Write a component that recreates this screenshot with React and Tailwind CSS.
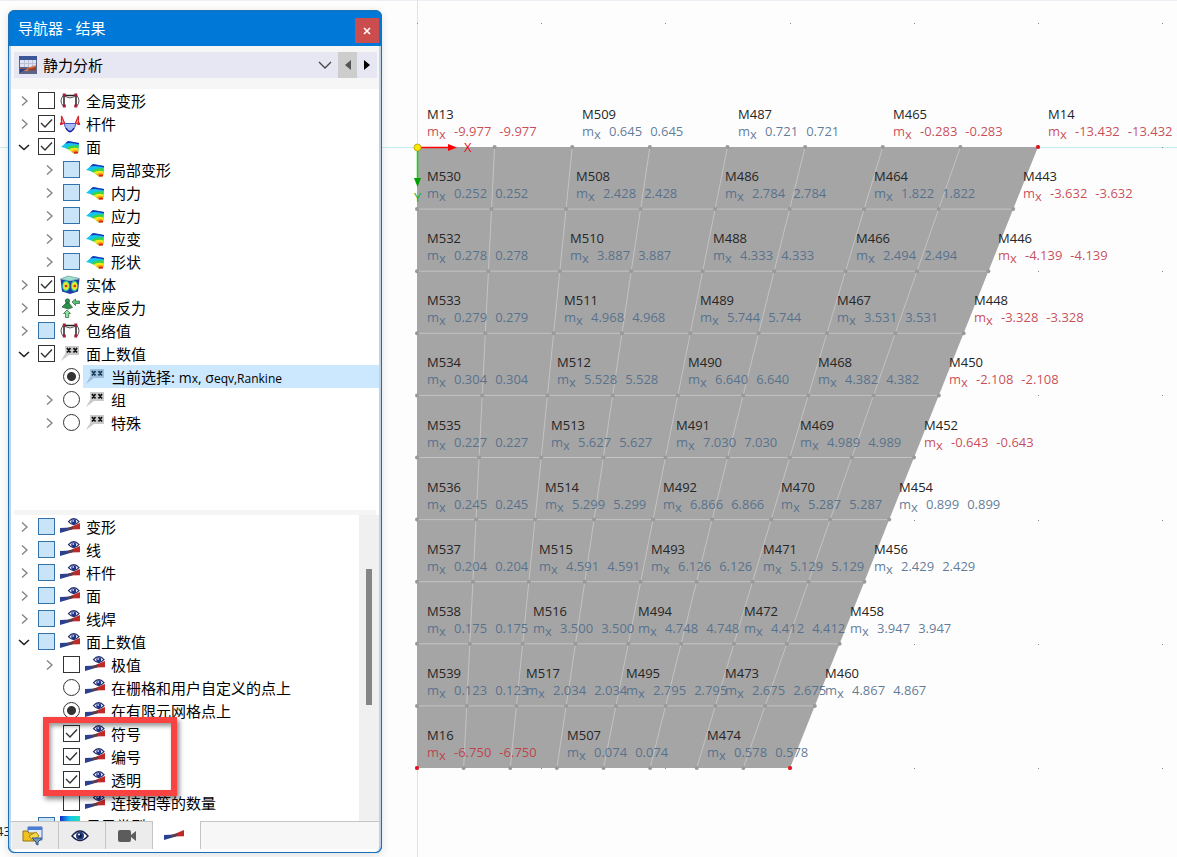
import { useId } from 'react'

const RESULT_ITEMS = [
  { label: '全局变形', icon: 'frame', state: 'off', arrow: 'closed' },
  { label: '杆件', icon: 'member', state: 'on', arrow: 'closed' },
  { label: '面', icon: 'surface', state: 'on', arrow: 'open' },
  { label: '局部变形', icon: 'surface', state: 'mixed', arrow: 'closed', child: true },
  { label: '内力', icon: 'surface', state: 'mixed', arrow: 'closed', child: true },
  { label: '应力', icon: 'surface', state: 'mixed', arrow: 'closed', child: true },
  { label: '应变', icon: 'surface', state: 'mixed', arrow: 'closed', child: true },
  { label: '形状', icon: 'surface', state: 'mixed', arrow: 'closed', child: true },
  { label: '实体', icon: 'solid', state: 'on', arrow: 'closed' },
  { label: '支座反力', icon: 'support', state: 'off', arrow: 'closed' },
  { label: '包络值', icon: 'frame', state: 'mixed', arrow: 'closed' },
  { label: '面上数值', icon: 'values', state: 'on', arrow: 'open' },
  { label: 'current', icon: 'values', state: 'on', radio: 'values', child: true, selected: true },
  { label: '组', icon: 'values', state: 'off', radio: 'values', arrow: 'closed', child: true },
  { label: '特殊', icon: 'values', state: 'off', radio: 'values', arrow: 'closed', child: true },
]

const DISPLAY_ITEMS = [
  { label: '变形', icon: 'display', state: 'mixed', arrow: 'closed' },
  { label: '线', icon: 'display', state: 'mixed', arrow: 'closed' },
  { label: '杆件', icon: 'display', state: 'mixed', arrow: 'closed' },
  { label: '面', icon: 'display', state: 'mixed', arrow: 'closed' },
  { label: '线焊', icon: 'display', state: 'mixed', arrow: 'closed' },
  { label: '面上数值', icon: 'display', state: 'mixed', arrow: 'open' },
  { label: '极值', icon: 'display', state: 'off', arrow: 'closed', child: true },
  { label: '在栅格和用户自定义的点上', icon: 'display', state: 'off', radio: 'points', child: true },
  { label: '在有限元网格点上', icon: 'display', state: 'on', radio: 'points', child: true },
  { label: '符号', icon: 'display', state: 'on', child: true },
  { label: '编号', icon: 'display', state: 'on', child: true },
  { label: '透明', icon: 'display', state: 'on', child: true },
  { label: '连接相等的数量', icon: 'display', state: 'off', child: true },
  { label: '显示类型', icon: 'rainbow', state: 'mixed' },
]

// one row per mesh line, [node name, value]
const MESH_VALUES = [
  [['M13', '-9.977'], ['M509', '0.645'], ['M487', '0.721'], ['M465', '-0.283'], ['M14', '-13.432']],
  [['M530', '0.252'], ['M508', '2.428'], ['M486', '2.784'], ['M464', '1.822'], ['M443', '-3.632']],
  [['M532', '0.278'], ['M510', '3.887'], ['M488', '4.333'], ['M466', '2.494'], ['M446', '-4.139']],
  [['M533', '0.279'], ['M511', '4.968'], ['M489', '5.744'], ['M467', '3.531'], ['M448', '-3.328']],
  [['M534', '0.304'], ['M512', '5.528'], ['M490', '6.640'], ['M468', '4.382'], ['M450', '-2.108']],
  [['M535', '0.227'], ['M513', '5.627'], ['M491', '7.030'], ['M469', '4.989'], ['M452', '-0.643']],
  [['M536', '0.245'], ['M514', '5.299'], ['M492', '6.866'], ['M470', '5.287'], ['M454', '0.899']],
  [['M537', '0.204'], ['M515', '4.591'], ['M493', '6.126'], ['M471', '5.129'], ['M456', '2.429']],
  [['M538', '0.175'], ['M516', '3.500'], ['M494', '4.748'], ['M472', '4.412'], ['M458', '3.947']],
  [['M539', '0.123'], ['M517', '2.034'], ['M495', '2.795'], ['M473', '2.675'], ['M460', '4.867']],
  [['M16', '-6.750'], ['M507', '0.074'], ['M474', '0.578']],
]

const LEFT = 417
const TOP = 147
const SIZE = 621
const BOTTOM_WIDTH = 373
const ROWS = 10
const COLS = 8
const GRID = SIZE / 5

function node(row, col) {
  const width = SIZE - ((SIZE - BOTTOM_WIDTH) * row) / ROWS
  return { x: LEFT + (width * col) / COLS, y: TOP + (SIZE * row) / ROWS }
}

const range = (n) => Array.from({ length: n }, (_, i) => i)

function FrameIcon() {
  return (
    <svg width="20" height="20" viewBox="0 0 20 20" fill="none">
      <path d="M4 16V4.500H16V16" stroke="#222" strokeWidth="1.500" />
      <path d="M5 5.500Q10 8.500 15 5.500M3.500 4Q-1.500 10 3.500 15.500M16.500 4Q21.500 10 16.500 15.500" stroke="#555" />
      <path d="M2.800 2.500h3v3h-3zM14.300 2.500h3v3h-3zM2.800 13.500h3v3h-3zM14.300 13.500h3v3h-3z" fill="#a51e38" />
    </svg>
  )
}

function MemberIcon() {
  return (
    <svg width="20" height="20" viewBox="0 0 20 20">
      <path d="M4 9.500H16Q13.500 18 10 18T4 9.500z" fill="#a9bdf5" stroke="#4a55c8" />
      <path d="M6 14Q10 21 14 14" fill="none" stroke="#1b2599" strokeWidth="1.300" />
      <path d="M1.500 2L1.500 10L4.500 9zM18.500 2L18.500 10L15.500 9z" fill="#f3b0b0" stroke="#d8262e" strokeWidth="1.200" />
      <path d="M0 8.500h2.500v2.500H0zM17.500 8.500h2.500v2.500h-2.500z" fill="#d8262e" />
    </svg>
  )
}

function SurfaceIcon() {
  return (
    <svg width="20" height="20" viewBox="0 0 20 20">
      <path d="M1 10L8 4L19 6L18 16L14 16.500Q8 11 1 10z" fill="#14c4ee" />
      <path d="M5 6.500L8 4L19 6L19 7.500Q11 5 5 6.500z" fill="#1e35b8" />
      <path d="M6 11Q11 7.500 18.800 8.500L18 16L14 16.500Q10 12 6 11z" fill="#38d44a" />
      <path d="M8.500 12.500Q13 9.800 18.500 11.500L18 16L14 16.500z" fill="#f4e81c" />
      <path d="M11.500 14.500Q14.500 12.200 18.300 13.500L18 16L14 16.500z" fill="#fb9a16" />
      <path d="M14 15Q16 14 18.100 15L18 16.500H14z" fill="#dd2018" />
    </svg>
  )
}

function SolidIcon() {
  return (
    <svg width="20" height="20" viewBox="0 0 20 20">
      <path d="M.5 4L10 6V19L2 16.500z" fill="#1e40b0" />
      <path d="M10 6L19.500 4L18 16.500L10 19z" fill="#2438a5" />
      <path d="M.5 4L8 1L19.500 3.500L10 6z" fill="#9ee0cf" stroke="#5d8a8a" strokeWidth=".6" />
      <ellipse cx="6" cy="11" rx="3.800" ry="5.400" fill="#22c4a8" />
      <ellipse cx="14.300" cy="11" rx="3.600" ry="5.400" fill="#22c4a8" />
      <ellipse cx="6" cy="11" rx="2.900" ry="4" fill="#e6e82a" />
      <ellipse cx="14.500" cy="11" rx="2.700" ry="4" fill="#e6e82a" />
      <circle cx="6" cy="11" r="1.300" fill="#d92424" />
      <circle cx="14.800" cy="11" r="1.300" fill="#d92424" />
    </svg>
  )
}

function SupportIcon() {
  return (
    <svg width="20" height="20" viewBox="0 0 20 20" fill="#2f8f4c" stroke="#1d6334" strokeWidth=".7">
      <circle cx="7.500" cy="3" r="2.200" />
      <path d="M6 5H9L12.500 9.500L8 11L2 9z" />
      <path d="M12 4L15.500 1V3H19.500V5.500H15.500V7.500z" fill="#5cc47a" />
      <path d="M7 12L10.500 15.500H8.700V19.500H5.500V15.500H3.500z" fill="#8ce0a0" />
    </svg>
  )
}

function ValuesIcon({ selected }) {
  return (
    <svg width="20" height="20" viewBox="0 0 20 20">
      <path d="M5 2H19V11H9L1 17L5.500 9z" fill={selected ? '#9fc0dc' : '#cacaca'} />
      <path d="M7 4L10.500 8.500M10.500 4L7 8.500M13.500 4L17 8.500M17 4L13.500 8.500" stroke={selected ? '#183a58' : '#111'} strokeWidth="1.700" />
    </svg>
  )
}

// blue wedge running into a red one, 20 units wide
function Wedges() {
  return (
    <>
      <path d="M0 11L11 10.500L14 11L12 12.500L0 16z" fill="#2b4190" />
      <path d="M8 11L20 6V12.300L8 12.600z" fill="#bd2a27" />
      <path d="M7 11L13 9.500V12L7 13z" fill="#54404e" />
    </>
  )
}

function DisplayIcon() {
  return (
    <svg width="20" height="20" viewBox="0 0 20 20">
      <Wedges />
      <path d="M8.500 4.700Q13.700 -1.500 19 4.700Q13.700 10.500 8.500 4.700z" fill="#fff" stroke="#222d6b" strokeWidth="1.200" />
      <circle cx="13.700" cy="4.700" r="2.500" fill="#1f3285" />
      <circle cx="13.200" cy="4" r=".9" fill="#b6c6ff" />
    </svg>
  )
}

function RainbowIcon() {
  const id = useId()
  return (
    <svg width="20" height="20" viewBox="0 0 20 20">
      <linearGradient id={id}>
        <stop offset="0" stopColor="#1726c8" />
        <stop offset=".5" stopColor="#16c6f0" />
        <stop offset="1" stopColor="#1fe0b0" />
      </linearGradient>
      <rect width="20" height="20" fill={`url(#${id})`} />
    </svg>
  )
}

function AnalysisIcon() {
  return (
    <svg className="shrink-0" width="18" height="18" viewBox="0 0 18 18">
      <rect width="18" height="18" fill="#5d6584" />
      <rect width="18" height="4" fill="#3c5698" />
      <rect x="1" y="4" width="16" height="7" fill="#dfe3f1" />
      <path d="M5.500 4V11M9.500 4V11M13.500 4V11M1 7.500H17" stroke="#b9c0d8" />
      <path d="M1 12H8L17 9V12L9 15H1z" fill="#d9774a" />
      <path d="M1 12.500H9L1 16.500z" fill="#263d88" />
      <path d="M9 13L17 11V14.500H9z" fill="#96412f" />
    </svg>
  )
}

const ICONS = {
  frame: FrameIcon,
  member: MemberIcon,
  surface: SurfaceIcon,
  solid: SolidIcon,
  support: SupportIcon,
  values: ValuesIcon,
  display: DisplayIcon,
  rainbow: RainbowIcon,
}

function Toggle({ id, state, radio }) {
  if (radio) {
    return (
      <input
        id={id}
        type="radio"
        name={radio}
        defaultChecked={state === 'on'}
        className="m-0 size-[17px] shrink-0 appearance-none rounded-full border border-[#333] bg-white checked:bg-[radial-gradient(circle,#333_4px,transparent_5px)]"
      />
    )
  }
  return (
    <span className="relative size-[17px] shrink-0">
      <input
        id={id}
        type="checkbox"
        defaultChecked={state === 'on'}
        className={`peer m-0 block size-[17px] appearance-none border ${
          state === 'mixed' ? 'border-[#3472aa] bg-[#c9e3f8]' : 'border-[#333] bg-white'
        }`}
      />
      <svg className="pointer-events-none absolute inset-0 hidden peer-checked:block" width="17" height="17" fill="none">
        <path d="M3 8L7 12L14 4.500" stroke="#333" strokeWidth="1.400" />
      </svg>
    </span>
  )
}

function TreeRow({ item }) {
  const id = useId()
  const Icon = ICONS[item.icon]
  return (
    <li className={`flex h-[23px] items-center ${item.child ? 'pl-[31px]' : 'pl-[6px]'}`}>
      {item.arrow ? (
        <button type="button" aria-label="展开" className="mr-2 flex w-3 shrink-0 justify-center">
          <svg width="12" height="12" viewBox="0 0 12 12" fill="none">
            {item.arrow === 'open' ? (
              <path d="M1 4L6 8.500L11 4" stroke="#222" strokeWidth="1.600" />
            ) : (
              <path d="M4 1.500L9 6L4 10.500" stroke="#858585" strokeWidth="1.400" />
            )}
          </svg>
        </button>
      ) : (
        <span className="mr-2 w-3 shrink-0" />
      )}
      <Toggle id={id} state={item.state} radio={item.radio} />
      <label
        htmlFor={id}
        className={`ml-[3px] flex h-full min-w-0 flex-1 items-center gap-[6px] pl-[2px] ${item.selected ? 'bg-[#cce8ff]' : ''}`}
      >
        <Icon selected={item.selected} />
        <span className="whitespace-nowrap">
          {item.selected ? (
            <>
              当前选择:{' '}
              <span className="text-sm">
                m<span className="text-xs">x</span>, σ<span className="text-xs">eqv,Rankine</span>
              </span>
            </>
          ) : (
            item.label
          )}
        </span>
      </label>
    </li>
  )
}

function Tree({ items }) {
  return (
    <ul className="min-w-0 flex-1">
      {items.map((item, i) => (
        <TreeRow key={i} item={item} />
      ))}
    </ul>
  )
}

function TabBar() {
  const tab = 'flex w-[47px] items-center justify-center border-r border-[#c4c4c4] bg-[#ececec] pr-[5px]'
  return (
    <div className="flex h-[28px] shrink-0 border-t border-[#c4c4c4] bg-[#f7f7f7] pl-px">
      <button type="button" aria-label="数据" className={tab}>
        <svg width="22" height="20" viewBox="0 0 22 20">
          <path d="M6 1H20V14H6z" fill="#dfe9fa" stroke="#3f6cc0" />
          <path d="M6 1H20V4H6z" fill="#4b7dd6" />
          <path d="M1 5H5L7 7H13V15H1z" fill="#f0c020" stroke="#96760c" />
          <path d="M7 10L14 6L17 10L11 15z" fill="#f8d84a" stroke="#a88412" />
          <path d="M10 12H20L16 16V19L14 18V16z" fill="#7099c5" stroke="#34587f" />
        </svg>
      </button>
      <button type="button" aria-label="显示" className={tab}>
        <svg width="18" height="14" viewBox="0 0 18 14">
          <path d="M1 7Q9 -3 17 7Q9 16 1 7z" fill="#fff" stroke="#172245" strokeWidth="1.400" />
          <circle cx="9" cy="6.800" r="4" fill="#233c80" />
          <circle cx="9" cy="6.800" r="1.800" fill="#081230" />
          <circle cx="8" cy="5.500" r="1" fill="#fff" />
        </svg>
      </button>
      <button type="button" aria-label="视图" className={tab}>
        <svg width="20" height="14" viewBox="0 0 20 14" fill="#5c5c5c">
          <rect x="1" y="1" width="13" height="12" rx="2" />
          <path d="M14 6L19 2V12L14 8z" />
        </svg>
      </button>
      <button type="button" aria-label="结果" className="-mt-px flex w-[48px] items-center justify-center border-r border-[#c4c4c4] bg-white pr-[5px]">
        <svg width="20" height="12" viewBox="0 5 20 12">
          <Wedges />
        </svg>
      </button>
    </div>
  )
}

function Navigator() {
  return (
    <aside className="absolute top-[10px] bottom-1 left-2 flex w-[374px] flex-col rounded-md border border-[#1d6fb4] bg-[#0078d7] text-[15px] leading-[22px] text-black shadow-[0_2px_8px_rgba(0,0,0,0.12)]">
      <header className="flex h-[35px] shrink-0 items-center justify-between pr-[2px] pl-[9px]">
        <h1 className="pb-[2px] text-white">导航器 - 结果</h1>
        <button type="button" aria-label="关闭" className="mt-1 flex h-[25px] w-[24px] items-center justify-center bg-[#cb4d4d]">
          <svg width="8" height="8" viewBox="0 0 8 8">
            <path d="M1 1L7 7M7 1L1 7" stroke="#fff" strokeWidth="1.600" />
          </svg>
        </button>
      </header>

      <div className="flex min-h-0 flex-1 flex-col rounded-b-md border-x-2 border-[#bdd3ea] bg-white pb-[3px]">
        <div className="shrink-0 bg-[#f6f6f6] pt-[6px] pr-[2px] pb-[11px] pl-[3px]">
          <div className="flex h-[26px] bg-[#e6e7f2]">
            <div className="relative flex flex-1 items-center gap-[6px] pl-[5px]">
              <AnalysisIcon />
              <select aria-label="分析类型" className="w-full appearance-none bg-transparent outline-none">
                <option>静力分析</option>
              </select>
              <svg className="pointer-events-none absolute right-[6px]" width="14" height="8" fill="none">
                <path d="M1 1L7 7L13 1" stroke="#444" strokeWidth="1.300" />
              </svg>
            </div>
            <button type="button" aria-label="上一个" className="flex w-[19px] items-center justify-center bg-[#cdcdcd]">
              <svg width="6" height="10">
                <path d="M6 0V10L0 5z" fill="#555" />
              </svg>
            </button>
            <button type="button" aria-label="下一个" className="flex w-[20px] items-center justify-center">
              <svg width="6" height="10">
                <path d="M0 0V10L6 5z" fill="#000" />
              </svg>
            </button>
          </div>
        </div>

        <div className="min-h-0 flex-1 overflow-hidden pl-[1px]">
          <Tree items={RESULT_ITEMS} />
        </div>
        <div className="mx-[3px] h-[5px] shrink-0 bg-[#f5f5f5]" />
        <div className="relative h-[306px] shrink-0">
          <div className="flex h-full overflow-hidden pl-[1px]">
            <Tree items={DISPLAY_ITEMS} />
            <div className="w-[20px] bg-[#f0f0f0] pt-[54px] pl-[7px]">
              <div className="h-[136px] w-[6px] bg-[#858585]" />
            </div>
          </div>
          <div className="pointer-events-none absolute top-[202px] left-[32px] h-[79px] w-[134px] border-[6px] border-[#f94343] shadow-[2px_3px_5px_rgba(0,0,0,0.5),inset_2px_3px_4px_rgba(0,0,0,0.4)]" />
        </div>
        <TabBar />
      </div>
    </aside>
  )
}

function NodeLabel({ x, y, name, value }) {
  const negative = value.startsWith('-')
  return (
    <g>
      <text x={x} y={y - 28} fill="#262626">
        {name}
      </text>
      <text y={y - 11} fill={negative ? '#c2343f' : '#4c6a8a'} fillOpacity={0.88}>
        <tspan x={x}>m</tspan>
        <tspan dy="3">x</tspan>
        <tspan x={x + 27} dy="-3">
          {value}
        </tspan>
        <tspan dx="8">{value}</tspan>
      </text>
    </g>
  )
}

function MeshView() {
  const corners = [node(0, COLS), node(ROWS, 0), node(ROWS, COLS)]
  return (
    <svg className="block h-full w-full font-['Open_Sans','Noto_Sans',sans-serif] text-[13px]">
      <path d="M0 .5H4000" stroke="#eceff3" />
      <path d={`M0 ${TOP + 0.5}H4000M${LEFT + 0.5} 0V4000`} stroke="#c6eef1" />
      {range(10).map((c) =>
        range(7).map((r) => (
          <rect key={`${c}-${r}`} x={Math.round(LEFT + GRID * (c - 3))} y={Math.round(TOP + GRID * (r - 1))} width="1" height="1" fill="#888" />
        )),
      )}
      <path
        d={`M${LEFT} ${TOP}H${LEFT + SIZE}L${LEFT + BOTTOM_WIDTH} ${TOP + SIZE}H${LEFT}z`}
        fill="#a5a5a5"
      />
      <g stroke="#c3c3c3">
        {range(ROWS - 1).map((r) => {
          const a = node(r + 1, 0)
          const b = node(r + 1, COLS)
          return <line key={r} x1={a.x} y1={a.y} x2={b.x} y2={b.y} />
        })}
        {range(COLS - 1).map((c) => {
          const a = node(0, c + 1)
          const b = node(ROWS, c + 1)
          return <line key={c} x1={a.x} y1={a.y} x2={b.x} y2={b.y} />
        })}
      </g>
      <g fill="#999">
        {range(ROWS + 1).map((r) =>
          range(COLS + 1).map((c) => {
            const p = node(r, c)
            return <circle key={`${r}-${c}`} cx={p.x} cy={p.y} r="2" />
          }),
        )}
      </g>
      {MESH_VALUES.map((row, r) =>
        row.map(([name, value], i) => {
          const p = node(r, i * (r === ROWS ? 3 : 2))
          return <NodeLabel key={name} x={Math.round(p.x) + 10} y={Math.round(p.y)} name={name} value={value} />
        }),
      )}
      {corners.map((p) => (
        <circle key={`${p.x}-${p.y}`} cx={p.x} cy={p.y} r="2" fill="#e8101c" />
      ))}

      <path d="M418 147.500H449" stroke="#f00" strokeWidth="1.500" />
      <path d="M448 144L457 147.500L448 151z" fill="#f00" />
      <text x="464" y="152" fill="#e8101c">X</text>
      <path d="M417.500 148V179" stroke="#00e000" strokeWidth="1.500" />
      <path d="M414 178H421L417.500 187z" fill="#00a000" />
      <text x="414" y="202" fill="#20b020">Y</text>
      <circle cx="417.500" cy="147.500" r="3.500" fill="#ffe600" stroke="#a09000" strokeWidth=".7" />
      <text x="-4" y="836" fill="#222">43</text>
    </svg>
  )
}

export default function App() {
  return (
    <main className="relative h-screen overflow-hidden bg-[#fdfdfd] font-['Open_Sans','Noto_Sans_CJK_SC',sans-serif]">
      <MeshView />
      <Navigator />
    </main>
  )
}
